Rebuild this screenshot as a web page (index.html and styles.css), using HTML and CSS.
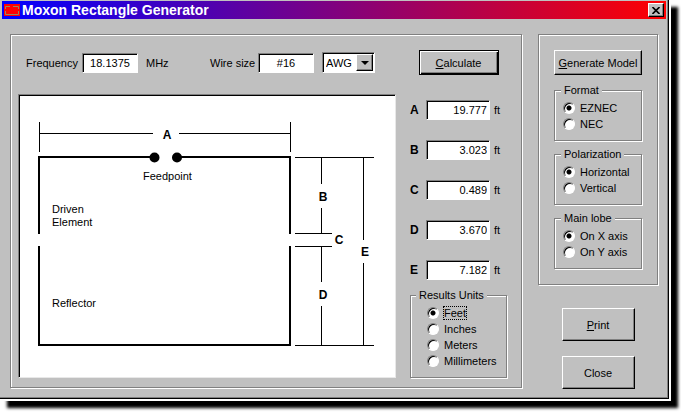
FILE: index.html
```html
<!DOCTYPE html>
<html lang="en">
<head>
<meta charset="utf-8">
<meta name="viewport" content="width=device-width, initial-scale=1">
<title>Moxon Rectangle Generator</title>
<link rel="stylesheet" href="styles.css">
</head>
<body>
<main class="window">
  <header class="titlebar">
    <svg class="app-icon" width="16" height="12" viewBox="0 0 16 12" aria-hidden="true">
      <rect width="16" height="12" fill="#f00"/>
      <path d="M1.500 5V2.500H6M9 2.500H14.500V5M1.500 7V10.500H14.500V7" fill="none" stroke="#908a60"/>
    </svg>
    <h1>Moxon Rectangle Generator</h1>
    <button class="close" type="button" aria-label="Close window">
      <svg width="8" height="7" viewBox="0 0 8 7" aria-hidden="true"><path d="M.5 0L7.500 7M7.500 0L.5 7" stroke="#000" stroke-width="1.600"/></svg>
    </button>
  </header>

  <form class="content">
    <section class="panel calculator">
      <div class="settings">
        <label for="freq">Frequency</label>
        <input class="field" id="freq" type="text" value="18.1375">
        <span class="unit">MHz</span>
        <label class="wire-label" for="wire">Wire size</label>
        <input class="field" id="wire" type="text" value="#16">
        <span class="select">
          <select aria-label="Wire size unit"><option>AWG</option><option>in</option><option>mm</option></select>
          <span class="arrow"></span>
        </span>
      </div>
      <button class="button default" type="button"><span><u>C</u>alculate</span></button>

      <div class="diagram">
        <svg viewBox="20 96 374 280" role="img" aria-label="Moxon rectangle dimensions">
          <g class="dimension">
            <path d="M39.500 122V152M290.500 122V152M39.500 133.500H153M179 133.500H290"/>
            <path d="M295 157.500H374M295 233.500H332M295 246.500H332M295 345.500H374"/>
            <path d="M321.500 157V184M321.500 208V233M321.500 246V282M321.500 306V345"/>
            <path d="M363.500 157V240M363.500 263V345"/>
          </g>
          <g class="wire">
            <path d="M154 157H39V234M177 157H290V234M39 246V345H290V246"/>
          </g>
          <circle cx="154.500" cy="157.500" r="5"/>
          <circle cx="177" cy="157.500" r="5"/>
          <g class="letters">
            <text x="167" y="139">A</text>
            <text x="323" y="201">B</text>
            <text x="339" y="244">C</text>
            <text x="323" y="299">D</text>
            <text x="365" y="256">E</text>
          </g>
          <text x="143" y="180">Feedpoint</text>
          <text x="52" y="213">Driven</text>
          <text x="52" y="226">Element</text>
          <text x="52" y="307">Reflector</text>
        </svg>
      </div>

      <div class="results">
        <div class="values">
          <label for="va">A</label><input class="field" id="va" type="text" readonly value="19.777"><span>ft</span>
          <label for="vb">B</label><input class="field" id="vb" type="text" readonly value="3.023"><span>ft</span>
          <label for="vc">C</label><input class="field" id="vc" type="text" readonly value="0.489"><span>ft</span>
          <label for="vd">D</label><input class="field" id="vd" type="text" readonly value="3.670"><span>ft</span>
          <label for="ve">E</label><input class="field" id="ve" type="text" readonly value="7.182"><span>ft</span>
        </div>
        <fieldset class="group units">
          <legend>Results Units</legend>
          <label><input type="radio" name="units" checked><span class="focused">Feet</span></label>
          <label><input type="radio" name="units"><span>Inches</span></label>
          <label><input type="radio" name="units"><span>Meters</span></label>
          <label><input type="radio" name="units"><span>Millimeters</span></label>
        </fieldset>
      </div>
    </section>

    <aside class="side">
      <section class="panel model">
        <button class="button" type="button"><span><u>G</u>enerate Model</span></button>
        <fieldset class="group">
          <legend>Format</legend>
          <label><input type="radio" name="format" checked><span>EZNEC</span></label>
          <label><input type="radio" name="format"><span>NEC</span></label>
        </fieldset>
        <fieldset class="group">
          <legend>Polarization</legend>
          <label><input type="radio" name="polarization" checked><span>Horizontal</span></label>
          <label><input type="radio" name="polarization"><span>Vertical</span></label>
        </fieldset>
        <fieldset class="group">
          <legend>Main lobe</legend>
          <label><input type="radio" name="lobe" checked><span>On X axis</span></label>
          <label><input type="radio" name="lobe"><span>On Y axis</span></label>
        </fieldset>
      </section>
      <div class="actions">
        <button class="button large" type="button"><span><u>P</u>rint</span></button>
        <button class="button large" type="button">Close</button>
      </div>
    </aside>
  </form>
</main>
</body>
</html>
```
FILE: styles.css
```css
:root {
  --face: #c0c0c0;
  --shade: #808080;
  --light: #fff;
}

* { box-sizing: border-box; }

body {
  margin: 0;
  background: #fff;
  color: #000;
  font: 11px/12px "Liberation Sans", Arial, sans-serif;
}

button, input, select { font: inherit; color: inherit; margin: 0; }

.window {
  margin: 0 12px 13px 0;
  padding: 1px 1px 9px 2px;
  background: var(--face);
  border-right: 1px solid #000;
  border-bottom: 1px solid #000;
  box-shadow: inset -1px -1px 0 var(--shade), 2px 2px 0 #fff, 8px 8px 3px 1px #000;
}

.titlebar {
  display: flex;
  align-items: center;
  height: 18px;
  margin-right: 1px;
  padding: 0 2px;
  background: linear-gradient(90deg, #00f, #f00);
}

.titlebar h1 {
  flex: 1;
  margin: 0 0 0 2px;
  color: #fff;
  font-size: 14px;
  line-height: 18px;
}

.close {
  display: flex;
  align-items: center;
  justify-content: center;
  width: 16px;
  height: 14px;
  padding: 0;
  background: var(--face);
  border: 1px solid;
  border-color: #fff #000 #000 #fff;
  box-shadow: inset -1px -1px 0 var(--shade);
}

.content {
  display: flex;
  align-items: flex-start;
  gap: 16px;
  padding: 15px 9px 0 8px;
}

.panel {
  border: 1px solid var(--shade);
  box-shadow: inset 1px 1px 0 var(--light), 1px 1px 0 var(--light);
}

.calculator {
  flex: 1;
  min-width: 0;
  display: grid;
  grid-template-columns: minmax(0, 1fr) 97px;
  column-gap: 14px;
  row-gap: 19px;
  padding: 15px 14px 9px 7px;
}

.settings {
  display: flex;
  align-items: center;
  gap: 8px;
  padding-left: 8px;
}

.settings label { width: 48px; white-space: nowrap; }
.settings .wire-label { width: 40px; }
.settings .unit { width: 56px; }
.settings .field { width: 56px; text-align: center; }

.field {
  width: 100%;
  height: 20px;
  padding: 0 4px;
  background: #fff;
  border: 1px solid;
  border-color: var(--shade) #fff #fff var(--shade);
  border-radius: 0;
  box-shadow: inset 1px 1px 0 #000;
  outline: 0;
}

.select { position: relative; display: flex; }

.select select {
  width: 53px;
  height: 21px;
  padding: 0 16px 0 3px;
  appearance: none;
  background: #fff;
  border: 1px solid;
  border-color: var(--shade) #fff #fff var(--shade);
  border-radius: 0;
  box-shadow: inset 1px 1px 0 #000;
}

.arrow {
  position: absolute;
  top: 2px;
  right: 2px;
  bottom: 2px;
  width: 17px;
  display: grid;
  place-items: center;
  background: var(--face);
  border: 1px solid;
  border-color: #fff #000 #000 #fff;
  box-shadow: inset -1px -1px 0 var(--shade);
  pointer-events: none;
}

.arrow::after {
  content: "";
  border: 4px solid transparent;
  border-top-color: #000;
  border-bottom: 0;
}

.button {
  height: 25px;
  padding: 0;
  background: var(--face);
  border: 1px solid;
  border-color: #fff #000 #000 #fff;
  border-radius: 0;
  box-shadow: inset -1px -1px 0 var(--shade);
  white-space: nowrap;
}

.button.default {
  width: 80px;
  justify-self: center;
  border-color: #000;
  box-shadow: inset 1px 1px 0 #fff, inset -1px -1px 0 #000, inset -2px -2px 0 var(--shade);
}

.button.large { width: 73px; height: 33px; }

.diagram {
  padding: 1px;
  background: #fff;
  border: 1px solid;
  border-color: var(--shade) #e8e8e8 #e8e8e8 var(--shade);
  box-shadow: inset 1px 1px 0 #000;
}

.diagram svg { display: block; width: 100%; height: auto; }
.dimension { fill: none; stroke: #000; stroke-width: 1; }
.wire { fill: none; stroke: #000; stroke-width: 2; }
.letters { font-size: 12px; font-weight: bold; text-anchor: middle; }

.results {
  display: flex;
  flex-direction: column;
  justify-content: space-between;
  padding-top: 6px;
}

.values {
  display: grid;
  grid-template-columns: 12px 64px 1fr;
  column-gap: 4px;
  row-gap: 20px;
  align-items: center;
}

.values label { font-size: 12px; font-weight: bold; }
.values .field { padding-right: 2px; text-align: right; }

.group {
  min-width: 0;
  margin: 0;
  padding: 4px 0 8px 8px;
  border: 1px solid var(--shade);
  box-shadow: inset 1px 1px 0 var(--light), 1px 1px 0 var(--light);
}

.group legend {
  margin-left: -2px;
  padding: 0 3px;
  background: var(--face);
}

.group label {
  display: flex;
  align-items: center;
  gap: 5px;
  height: 16px;
  white-space: nowrap;
}

.units { padding-left: 16px; }
.units legend { margin-left: -11px; }

.group input {
  flex: none;
  width: 12px;
  height: 12px;
  appearance: none;
  background: #fff;
  border: 1px solid;
  border-color: var(--shade) #fff #fff var(--shade);
  border-radius: 50%;
  box-shadow: inset 1px 1px 0 #000;
}

.group input:checked {
  background: radial-gradient(circle, #000 2px, #fff 3px);
}

.focused { outline: 1px dotted #000; }

.side { flex: none; width: 120px; }

.model {
  display: flex;
  flex-direction: column;
  gap: 7px;
  padding: 15px;
}

.model .button { margin-bottom: 2px; }

.actions {
  display: flex;
  flex-direction: column;
  align-items: center;
  gap: 15px;
  margin-top: 23px;
}
```
